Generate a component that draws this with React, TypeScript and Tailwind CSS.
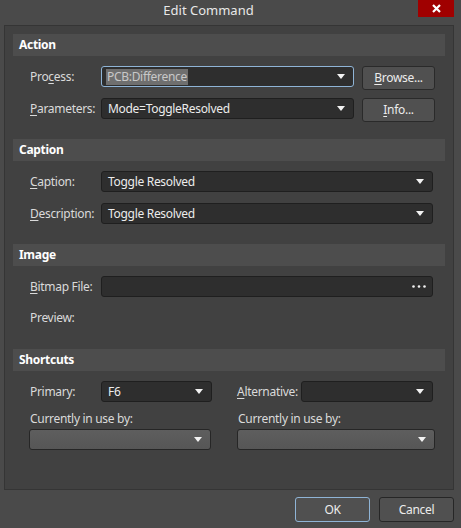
import React from 'react';

const font = { fontFamily: '"Noto Sans", "Open Sans", sans-serif' };

function Caret() {
  return (
    <svg width="8" height="5" viewBox="0 0 8 5" className="shrink-0">
      <path d="M0 0 H8 L4 5 Z" fill="#f2f2f2" />
    </svg>
  );
}

function Acc({ k, rest, pre = '' }: { k: string; rest: string; pre?: string }) {
  return (
    <span>
      {pre}
      <span className="underline underline-offset-2">{k}</span>
      {rest}
    </span>
  );
}

function Combo({ value, className = '' }: { value?: string; className?: string }) {
  return (
    <div
      className={`h-[21px] flex items-center justify-between pl-[6px] pr-[8px] bg-[#2e2e2e] border border-[#1f1f1f] rounded-[3px] text-[#ececec] ${className}`}
    >
      <span>{value}</span>
      <Caret />
    </div>
  );
}

function Btn({ children, className = '' }: { children: React.ReactNode; className?: string }) {
  return (
    <div
      className={`h-[24px] flex items-center justify-center bg-[#505050] border border-[#2a2a2a] rounded-[3px] text-[#ececec] ${className}`}
    >
      {children}
    </div>
  );
}

function Header({ title, className = '' }: { title: string; className?: string }) {
  return (
    <div className={`h-[22px] flex items-center pl-[6px] bg-[#4d4d4d] font-bold text-white ${className}`}>
      {title}
    </div>
  );
}

export default function App() {
  return (
    <div
      className="w-[461px] h-[528px] bg-[#4a4a4a] text-[12px] tracking-[-0.3px] text-[#dadada] flex flex-col"
      style={font}
    >
      {/* title bar */}
      <div className="relative h-[25px] flex items-start justify-center pt-[1px]">
        <span className="text-[13px] tracking-normal text-[#e8e8e8] ml-[-44px]">Edit Command</span>
        <div className="absolute right-[7px] top-0 w-[36px] h-[17px] bg-[#a00000] flex items-center justify-center">
          <svg width="9" height="9" viewBox="0 0 9 9">
            <path d="M1 1 L8 8 M8 1 L1 8" stroke="#ffffff" strokeWidth="2.2" />
          </svg>
        </div>
      </div>

      {/* main panel */}
      <div className="ml-[4px] mr-[7px] h-[465px] bg-[#414141] border border-[#353535] px-[8px] pt-[8px]">
        <Header title="Action" />
        <div className="mt-[10px] pl-[17px] flex items-start">
          <div className="w-[71px] h-[21px] flex items-center">
            <Acc pre="Pro" k="c" rest="ess:" />
          </div>
          <div className="w-[253px] h-[21px] flex items-center justify-between pl-[4px] pr-[8px] bg-[#2e2e2e] border border-[#8fb4d6] rounded-[3px]">
            <span className="bg-[#6f6f6f] text-[#c8c8c8] px-[1px] leading-[16px]">PCB:Difference</span>
            <Caret />
          </div>
          <Btn className="ml-[8px] w-[73px]">
            <Acc k="B" rest="rowse..." />
          </Btn>
        </div>
        <div className="mt-[8px] pl-[17px] flex items-start">
          <div className="w-[71px] h-[21px] flex items-center">
            <Acc k="P" rest="arameters:" />
          </div>
          <Combo value="Mode=ToggleResolved" className="w-[253px]" />
          <Btn className="ml-[8px] w-[73px]">
            <Acc k="I" rest="nfo..." />
          </Btn>
        </div>

        <Header title="Caption" className="mt-[17px]" />
        <div className="mt-[10px] pl-[17px] pr-[12px] flex items-center">
          <div className="w-[71px] shrink-0">
            <Acc k="C" rest="aption:" />
          </div>
          <Combo value="Toggle Resolved" className="flex-1" />
        </div>
        <div className="mt-[11px] pl-[17px] pr-[12px] flex items-center">
          <div className="w-[71px] shrink-0">
            <Acc k="D" rest="escription:" />
          </div>
          <Combo value="Toggle Resolved" className="flex-1" />
        </div>

        <Header title="Image" className="mt-[20px]" />
        <div className="mt-[10px] pl-[17px] pr-[12px] flex items-center">
          <div className="w-[71px] shrink-0">
            <Acc k="B" rest="itmap File:" />
          </div>
          <div className="flex-1 h-[21px] flex items-center justify-end pr-[6px] bg-[#2e2e2e] border border-[#1f1f1f] rounded-[3px]">
            <svg width="14" height="3" viewBox="0 0 14 3">
              <circle cx="1.5" cy="1.5" r="1.3" fill="#f2f2f2" />
              <circle cx="7" cy="1.5" r="1.3" fill="#f2f2f2" />
              <circle cx="12.5" cy="1.5" r="1.3" fill="#f2f2f2" />
            </svg>
          </div>
        </div>
        <div className="mt-[12px] pl-[17px] h-[18px] flex items-center">Preview:</div>

        <Header title="Shortcuts" className="mt-[22px]" />
        <div className="mt-[10px] pl-[17px] flex items-center">
          <div className="w-[71px] shrink-0">Primary:</div>
          <Combo value="F6" className="w-[111px]" />
          <div className="ml-[25px] w-[64px] shrink-0">
            <Acc k="A" rest="lternative:" />
          </div>
          <Combo className="w-[132px]" />
        </div>
        <div className="mt-[9px] pl-[16px] flex items-start">
          <div className="w-[182px] flex flex-col">
            <div className="h-[16px] leading-[16px] pl-[1px]">Currently in use by:</div>
            <div className="mt-[2px] h-[21px] flex items-center justify-end pr-[8px] border border-[#262626] rounded-[3px] bg-gradient-to-b from-[#5e5e5e] to-[#565656]">
              <Caret />
            </div>
          </div>
          <div className="ml-[26px] w-[198px] flex flex-col">
            <div className="h-[16px] leading-[16px] pl-[1px]">Currently in use by:</div>
            <div className="mt-[2px] h-[21px] flex items-center justify-end pr-[8px] border border-[#262626] rounded-[3px] bg-gradient-to-b from-[#5e5e5e] to-[#565656]">
              <Caret />
            </div>
          </div>
        </div>
      </div>

      {/* footer */}
      <div className="flex justify-end mt-[7px] pr-[7px] gap-[9px]">
        <Btn className="w-[75px] h-[25px] !border-[#8fb4d6] bg-[#4a4a4a]">OK</Btn>
        <Btn className="w-[75px] h-[25px] bg-[#4a4a4a] !border-[#262626]">Cancel</Btn>
      </div>
    </div>
  );
}
